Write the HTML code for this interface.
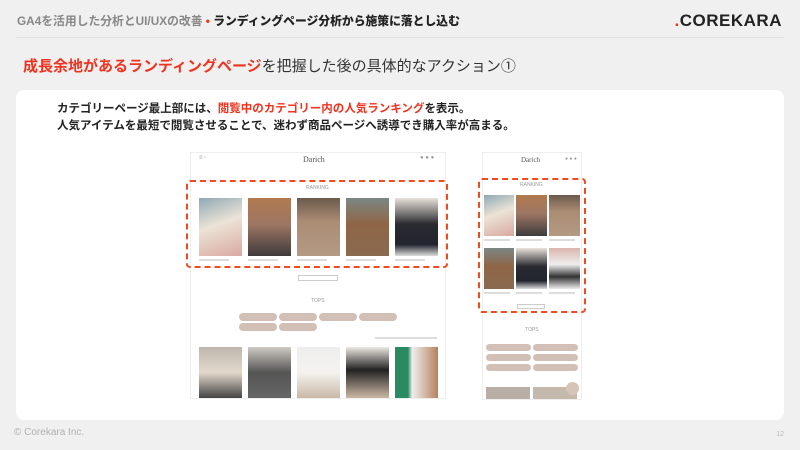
<!DOCTYPE html>
<html><head><meta charset="utf-8">
<style>
*{margin:0;padding:0;box-sizing:border-box}
body{width:800px;height:450px;background:#f0f0f0;font-family:"Liberation Sans","Noto Sans CJK JP",sans-serif;position:relative;overflow:hidden}
.a{position:absolute}
.hdr{left:17px;top:12px;font-size:11.8px;font-weight:bold;color:#888;white-space:nowrap}
.hdr b{color:#222}
.hdr i{color:#e8391d;font-style:normal}
.logo{right:18px;top:11px;font-size:17px;font-weight:bold;color:#222;letter-spacing:0.5px}
.logo span{color:#e8391d}
.line{left:16px;top:37px;width:768px;height:1px;background:#e2e2e2}
.title{left:23px;top:55px;font-size:15px;color:#333;white-space:nowrap}
.title em{color:#f0321e;font-style:normal;font-weight:bold}
.card{left:16px;top:90px;width:768px;height:330px;background:#fff;border-radius:8px}
.txt{left:57px;top:101px;font-size:11.5px;font-weight:bold;color:#222;line-height:17px;white-space:nowrap}
.txt em{color:#f0321e;font-style:normal}
.frame{background:#fff;border:1px solid #eee}
.dash{border:2px dashed #f04a1e;border-radius:4px}
.ph{position:absolute}
.sm{font-size:6px;color:#999}
.cap{position:absolute;height:2px;background:#ddd}
.pill{position:absolute;height:8px;border-radius:4px;background:#d2c0b6}
.foot{left:14px;top:427px;font-size:10px;color:#b0b0b0}
.num{right:16px;top:431px;font-size:7px;color:#bbb}
</style></head><body>
<div class="a hdr">GA4を活用した分析とUI/UXの改善 <i>•</i> <b>ランディングページ分析から施策に落とし込む</b></div>
<div class="a logo"><span>.</span>COREKARA</div>
<div class="a line"></div>
<div class="a title"><em>成長余地があるランディングページ</em>を把握した後の具体的なアクション①</div>
<div class="a card"></div>
<div class="a txt">カテゴリーページ最上部には、<em>閲覧中のカテゴリー内の人気ランキング</em>を表示。<br>人気アイテムを最短で閲覧させることで、迷わず商品ページへ誘導でき購入率が高まる。</div>

<!-- desktop -->
<div class="a frame" style="left:190px;top:152px;width:256px;height:247px"></div>
<div class="a" style="left:303px;top:155px;font-family:'Liberation Serif',serif;font-size:8px;color:#555">Darich</div>
<div class="a sm" style="left:199px;top:155px">≡ ◦</div>
<div class="a sm" style="left:420px;top:155px">● ● ●</div>
<div class="a sm" style="left:306px;top:185px;font-size:5px">RANKING</div>
<div class="ph" style="left:199px;top:198px;width:43px;height:58px;background:linear-gradient(160deg,#8fa9b5,#ece3d6 45%,#d9a8a0)"></div>
<div class="ph" style="left:248px;top:198px;width:43px;height:58px;background:linear-gradient(180deg,#b07a4f,#9e7664 45%,#3e3b3c)"></div>
<div class="ph" style="left:297px;top:198px;width:43px;height:58px;background:linear-gradient(180deg,#6b5a4c,#ab8c74 40%,#b49a84)"></div>
<div class="ph" style="left:346px;top:198px;width:43px;height:58px;background:linear-gradient(180deg,#7b8784,#8f6546 45%,#8a6a50)"></div>
<div class="ph" style="left:395px;top:198px;width:43px;height:58px;background:linear-gradient(180deg,#e8e2da,#2a2a30 45%,#22252e 80%,#ddd)"></div>
<div class="cap" style="left:199px;top:259px;width:30px"></div>
<div class="cap" style="left:248px;top:259px;width:30px"></div>
<div class="cap" style="left:297px;top:259px;width:30px"></div>
<div class="cap" style="left:346px;top:259px;width:30px"></div>
<div class="cap" style="left:395px;top:259px;width:30px"></div>
<div class="a" style="left:298px;top:275px;width:40px;height:6px;border:1px solid #ccc"></div>
<div class="a sm" style="left:311px;top:298px;font-size:5px">TOPS</div>
<div class="pill" style="left:239px;top:313px;width:38px"></div>
<div class="pill" style="left:279px;top:313px;width:38px"></div>
<div class="pill" style="left:319px;top:313px;width:38px"></div>
<div class="pill" style="left:359px;top:313px;width:38px"></div>
<div class="pill" style="left:239px;top:323px;width:38px"></div>
<div class="pill" style="left:279px;top:323px;width:38px"></div>
<div class="cap" style="left:375px;top:337px;width:62px"></div>
<div class="ph" style="left:199px;top:347px;width:43px;height:51px;background:linear-gradient(180deg,#bfb6ad,#e2d8cb 50%,#444)"></div>
<div class="ph" style="left:248px;top:347px;width:43px;height:51px;background:linear-gradient(180deg,#cfcac4,#555 50%,#666)"></div>
<div class="ph" style="left:297px;top:347px;width:43px;height:51px;background:linear-gradient(180deg,#eee,#f4f2ef 50%,#c9b8a6)"></div>
<div class="ph" style="left:346px;top:347px;width:43px;height:51px;background:linear-gradient(180deg,#ece8e3,#222 45%,#cbb8a4)"></div>
<div class="ph" style="left:395px;top:347px;width:43px;height:51px;background:linear-gradient(90deg,#2a8a62 30%,#eee 40%,#b8815c)"></div>
<div class="a dash" style="left:186px;top:180px;width:262px;height:88px"></div>

<!-- mobile -->
<div class="a frame" style="left:482px;top:152px;width:100px;height:248px"></div>
<div class="a" style="left:521px;top:156px;font-family:'Liberation Serif',serif;font-size:7px;color:#555">Darich</div>
<div class="a sm" style="left:565px;top:156px;font-size:5px">● ● ●</div>
<div class="a sm" style="left:520px;top:182px;font-size:5px">RANKING</div>
<div class="ph" style="left:484px;top:195px;width:30px;height:41px;background:linear-gradient(160deg,#8fa9b5,#ece3d6 45%,#d9a8a0)"></div>
<div class="ph" style="left:516px;top:195px;width:31px;height:41px;background:linear-gradient(180deg,#b07a4f,#9e7664 45%,#3e3b3c)"></div>
<div class="ph" style="left:549px;top:195px;width:31px;height:41px;background:linear-gradient(180deg,#6b5a4c,#ab8c74 40%,#b49a84)"></div>
<div class="cap" style="left:484px;top:239px;width:26px"></div>
<div class="cap" style="left:516px;top:239px;width:26px"></div>
<div class="cap" style="left:549px;top:239px;width:26px"></div>
<div class="ph" style="left:484px;top:248px;width:30px;height:41px;background:linear-gradient(180deg,#7b8784,#8f6546 45%,#8a6a50)"></div>
<div class="ph" style="left:516px;top:248px;width:31px;height:41px;background:linear-gradient(180deg,#e8e2da,#2a2a30 45%,#22252e 80%,#ddd)"></div>
<div class="ph" style="left:549px;top:248px;width:31px;height:41px;background:linear-gradient(180deg,#d8b5ab,#eee 40%,#333 70%,#eee)"></div>
<div class="cap" style="left:484px;top:292px;width:26px"></div>
<div class="cap" style="left:516px;top:292px;width:26px"></div>
<div class="cap" style="left:549px;top:292px;width:26px"></div>
<div class="a" style="left:517px;top:304px;width:28px;height:5px;border:1px solid #ccc"></div>
<div class="a sm" style="left:525px;top:327px;font-size:5px">TOPS</div>
<div class="pill" style="left:486px;top:344px;width:45px;height:7px"></div>
<div class="pill" style="left:533px;top:344px;width:45px;height:7px"></div>
<div class="pill" style="left:486px;top:354px;width:45px;height:7px"></div>
<div class="pill" style="left:533px;top:354px;width:45px;height:7px"></div>
<div class="pill" style="left:486px;top:364px;width:45px;height:7px"></div>
<div class="pill" style="left:533px;top:364px;width:45px;height:7px"></div>
<div class="ph" style="left:486px;top:387px;width:44px;height:12px;background:#b9aea5"></div>
<div class="ph" style="left:533px;top:387px;width:44px;height:12px;background:#c5b8ad"></div>
<div class="ph" style="left:566px;top:382px;width:13px;height:13px;border-radius:50%;background:#d7c4b8"></div>
<div class="a dash" style="left:478px;top:178px;width:108px;height:135px"></div>

<div class="a foot">© Corekara Inc.</div>
<div class="a num">12</div>
</body></html>
